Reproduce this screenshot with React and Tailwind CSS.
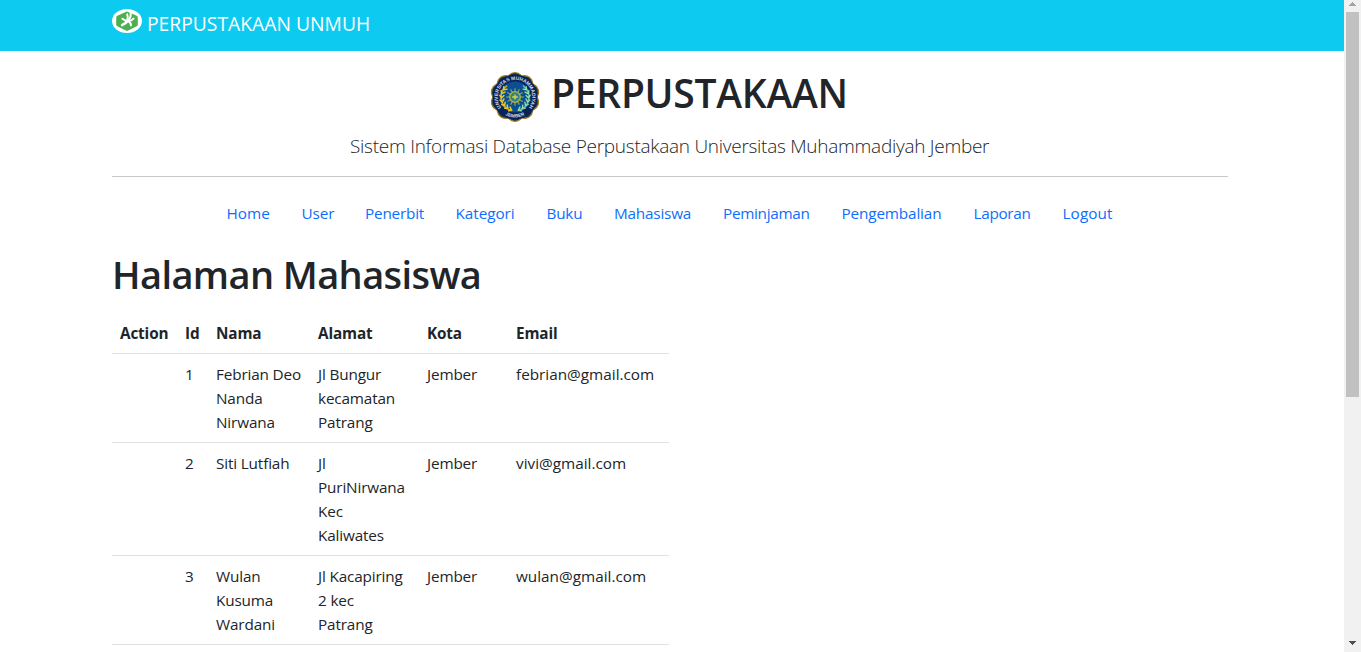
import React from "react";

const links = [
  { label: "Home", cls: "w-[75px]" },
  { label: "User", cls: "w-[63.5px] tracking-[-0.1px]" },
  { label: "Penerbit", cls: "w-[90.5px] tracking-[-0.2px]" },
  { label: "Kategori", cls: "w-[91px] tracking-[-0.05px]" },
  { label: "Buku", cls: "w-[67.5px] tracking-[-0.2px]" },
  { label: "Mahasiswa", cls: "w-[109px] tracking-[-0.2px]" },
  { label: "Peminjaman", cls: "w-[118.5px] tracking-[-0.3px]" },
  { label: "Pengembalian", cls: "w-[132px] tracking-[-0.15px]" },
  { label: "Laporan", cls: "w-[89px] tracking-[-0.3px]" },
  { label: "Logout", cls: "w-[66px] tracking-[0.1px]" },
];

const rows = [
  { id: 1, nama: ["Febrian Deo", "Nanda", "Nirwana"], alamat: ["Jl Bungur", "kecamatan", "Patrang"], kota: "Jember", email: "febrian@gmail.com" },
  { id: 2, nama: ["Siti Lutfiah"], alamat: ["Jl", "PuriNirwana", "Kec", "Kaliwates"], kota: "Jember", email: "vivi@gmail.com" },
  { id: 3, nama: ["Wulan", "Kusuma", "Wardani"], alamat: ["Jl Kacapiring", "2 kec", "Patrang"], kota: "Jember", email: "wulan@gmail.com" },
];

function BrandIcon() {
  return (
    <svg className="mt-[9px] h-6 w-[30px] shrink-0" viewBox="0 0 30 24">
      <ellipse cx="15" cy="12" rx="15" ry="12" fill="#fff" />
      <path d="M15 2.6 L24.7 6.8 Q25.8 7.4 25.8 8.4 V15.8 Q25.8 16.7 24.7 17.3 L16.2 21.4 Q15 22 13.8 21.4 L5.3 17.3 Q4.2 16.7 4.2 15.8 V8.4 Q4.2 7.4 5.3 6.8 Z" fill="#4caf50" />
      <g stroke="#fff" strokeLinecap="round" strokeLinejoin="round" fill="none">
        <path d="M10.2 16 Q13.6 15 15.8 11.6" strokeWidth="2.8" />
        <path d="M14.8 11.8 Q12.6 11.6 10.4 9.8" strokeWidth="2" />
        <path d="M15.4 11 Q16.2 8 15.2 5.4" strokeWidth="2" />
        <path d="M16.2 11 Q19.4 8.6 18.6 3.6" strokeWidth="2" />
        <path d="M16.2 11.8 Q19.6 11.8 21.6 9.6" strokeWidth="1.9" />
        <path d="M15.8 12 Q18.8 13 19 16.4" strokeWidth="2" />
      </g>
    </svg>
  );
}

function Emblem() {
  const petals = Array.from({ length: 10 }, (_, i) => i * 36);
  const rays = Array.from({ length: 12 }, (_, i) => i * 30);
  const leaves = [-64, -46, -28, -10, 8, 26, 44];
  return (
    <svg className="h-[50px] w-[50px] shrink-0" viewBox="-25 -25 50 50">
      <defs>
        <path id="arcTop" d="M-12.2 12.2 A17.2 17.2 0 1 1 12.2 12.2" />
        <path id="arcBottom" d="M-14 15 A20.5 20.5 0 0 0 14 15" />
      </defs>
      <g fill="#132c50" stroke="#a27a1c" strokeWidth="1.3">
        {petals.map((a) => (
          <circle key={a} cx="0" cy="-16" r="8.3" transform={`rotate(${a})`} />
        ))}
      </g>
      <circle r="22.4" fill="#06245a" />
      <circle r="15.6" fill="#0b4f93" />
      <g strokeLinecap="round" fill="none">
        <path d="M-3.5 13.4 A13.8 13.8 0 0 1 -8.4 -11" stroke="#b8a52c" strokeWidth="1.6" />
        <path d="M3.5 13.4 A13.8 13.8 0 0 0 8.4 -11" stroke="#62b59a" strokeWidth="1.6" />
        {leaves.map((a) => (
          <path key={a} d="M-11.2 0 L-13.2 2.6 L-15.2 .4" stroke="#e8c92c" strokeWidth="1.5" transform={`rotate(${a})`} />
        ))}
        {leaves.map((a) => (
          <path key={a} d="M11.2 0 L13.2 2.6 L15.2 .4" stroke="#9adfa4" strokeWidth="1.3" transform={`rotate(${-a})`} />
        ))}
      </g>
      <g stroke="#8fa257" strokeWidth="1.2">
        {rays.map((a) => (
          <path key={a} d="M0 -4 V-8.8" transform={`rotate(${a})`} />
        ))}
      </g>
      <circle r="5.3" fill="#2f8288" stroke="#b9b73a" strokeWidth="1.2" />
      <path d="M-2.8 0 H2.8 M0 -2.4 V2.4" stroke="#d9d545" strokeWidth="1.4" />
      <g className="font-['Liberation_Sans'] font-bold" fill="#d3dae6">
        <text fontSize="5"><textPath href="#arcTop" startOffset="50%" textAnchor="middle" textLength="76" lengthAdjust="spacingAndGlyphs">UNIVERSITAS MUHAMMADIYAH</textPath></text>
        <text fontSize="4.8"><textPath href="#arcBottom" startOffset="50%" textAnchor="middle">JEMBER</textPath></text>
      </g>
    </svg>
  );
}

function Lines({ items }) {
  return items.map((line) => <div key={line} className="whitespace-nowrap">{line}</div>);
}

export default function App() {
  return (
    <div className="flex h-screen overflow-hidden bg-white font-['Open_Sans',sans-serif] text-[15.3px] leading-6 text-[#212529]">
      <div className="min-w-0 flex-1">
        <nav className="flex h-[51px] items-start gap-[5px] bg-[#0dcaf0] pl-[112px] text-white">
          <BrandIcon />
          <span className="pt-[9px] text-[19.3px] leading-[30px]">PERPUSTAKAAN UNMUH</span>
        </nav>

        <main className="ml-[112px] w-[1116px]">
          <header className="flex h-[126px] flex-col border-b border-[#c8c9ca]">
            <div className="flex pl-[378px] pt-[21px]">
              <Emblem />
              <h1 className="ml-[11px] text-[39px] font-semibold leading-[42px] tracking-[-0.25px]">PERPUSTAKAAN</h1>
            </div>
            <p className="whitespace-nowrap pl-[238px] pt-[9px] text-[19px] font-light leading-[30px] tracking-[-0.27px]">
              Sistem Informasi Database Perpustakaan Universitas Muhammadiyah Jember
            </p>
          </header>

          <ul className="flex pl-[114.5px] pt-[24px] text-[#0d6efd]">
            {links.map((l) => (
              <li key={l.label} className={`shrink-0 ${l.cls}`}>{l.label}</li>
            ))}
          </ul>

          <h1 className="mt-[25px] h-[62px] text-[38px] font-semibold leading-[48px] tracking-[-0.6px]">Halaman Mahasiswa</h1>

          <table className="w-[557px] table-fixed border-collapse text-left align-top">
            <colgroup>
              <col className="w-[65px]" />
              <col className="w-[31px]" />
              <col className="w-[102px]" />
              <col className="w-[109px]" />
              <col className="w-[89px]" />
              <col className="w-[161px]" />
            </colgroup>
            <thead>
              <tr className="border-b border-[#dee2e6]">
                {["Action", "Id", "Nama", "Alamat", "Kota", "Email"].map((h) => (
                  <th key={h} className="h-[41px] px-2 pb-0 pt-[2px] font-bold tracking-[-0.15px]">{h}</th>
                ))}
              </tr>
            </thead>
            <tbody>
              {rows.map((r) => (
                <tr key={r.id} className="border-b border-[#dee2e6] align-top tracking-[-0.15px]">
                  <td className="p-2" />
                  <td className="p-2">{r.id}</td>
                  <td className="p-2"><Lines items={r.nama} /></td>
                  <td className="p-2"><Lines items={r.alamat} /></td>
                  <td className="p-2">{r.kota}</td>
                  <td className="p-2 tracking-normal">{r.email}</td>
                </tr>
              ))}
            </tbody>
          </table>
        </main>
      </div>

      <div className="flex w-[17px] shrink-0 flex-col items-center bg-[#f1f1f1]">
        <svg className="h-3 w-[17px]" viewBox="0 0 17 12" shapeRendering="crispEdges">
          <path d="M8 2h1v1H8zM7 3h3v1H7zM6 4h5v1H6zM5 5h7v1H5z" fill="#a3a3a3" />
        </svg>
        <div className="h-[385px] w-[13px] bg-[#c1c1c1]" />
        <svg className="mt-auto h-[15px] w-[17px]" viewBox="0 0 17 15" shapeRendering="crispEdges">
          <path d="M5 4h7v1H5zM6 5h5v1H6zM7 6h3v1H7zM8 7h1v1H8z" fill="#505050" />
        </svg>
      </div>
    </div>
  );
}
